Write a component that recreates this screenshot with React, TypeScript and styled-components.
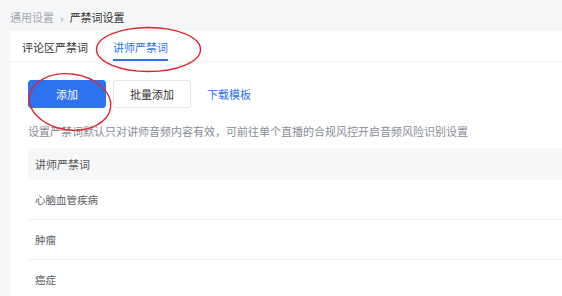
import React from "react";
import styled, { createGlobalStyle } from "styled-components";

const GlobalStyle = createGlobalStyle`
  html, body {
    margin: 0;
    padding: 0;
    background: #f5f6f8;
    font-family: "Noto Sans CJK SC", "Liberation Sans", sans-serif;
  }
`;

const Page = styled.div`
  position: relative;
  width: 562px;
  height: 296px;
  overflow: hidden;
  background: #f5f6f8;
  padding-left: 10px;
  box-sizing: border-box;
`;

const Crumbs = styled.div`
  height: 31px;
  display: flex;
  align-items: center;
  gap: 6px;
  font-size: 11px;
  padding-top: 3px;
  box-sizing: border-box;
  color: #a3a8b0;
  .sep {
    font-size: 12px;
    color: #a0a4ab;
  }
  .cur {
    color: #333;
  }
`;

const Panel = styled.div`
  background: #fff;
  height: 265px;
`;

const Tabs = styled.div`
  display: flex;
  height: 30px;
  padding-left: 12px;
  gap: 25px;
  border-bottom: 1px solid #eef0f3;
`;

const Tab = styled.div<{ $active?: boolean }>`
  position: relative;
  display: flex;
  align-items: center;
  font-size: 11px;
  padding-top: 2px;
  color: ${({ $active }) => ($active ? "#2d72ee" : "#333")};
  &::after {
    content: "";
    display: ${({ $active }) => ($active ? "block" : "none")};
    position: absolute;
    left: 0;
    right: 0;
    bottom: 0;
    height: 2px;
    background: #2d72ee;
  }
`;

const Content = styled.div`
  padding: 18px 0 0 18px;
`;

const Toolbar = styled.div`
  display: flex;
  align-items: center;
  gap: 7px;
`;

const Button = styled.button<{ $primary?: boolean }>`
  width: 78px;
  height: 28px;
  border-radius: 3px;
  font-family: inherit;
  font-size: 11px;
  cursor: pointer;
  border: 1px solid ${({ $primary }) => ($primary ? "#2d72ee" : "#e3e5e9")};
  background: ${({ $primary }) => ($primary ? "#2d72ee" : "#fff")};
  color: ${({ $primary }) => ($primary ? "#fff" : "#333")};
`;

const Link = styled.a`
  margin-left: 9px;
  font-size: 11px;
  color: #2d72ee;
  text-decoration: none;
`;

const Hint = styled.p`
  margin: 15px 0 0;
  font-size: 11px;
  line-height: 16px;
  color: #888d95;
  white-space: nowrap;
`;

const Table = styled.div`
  margin-top: 9px;
`;

const HeadRow = styled.div`
  height: 32px;
  display: flex;
  align-items: center;
  padding-left: 7px;
  background: #f5f7f9;
  font-size: 11px;
  color: #555;
`;

const Row = styled.div`
  height: 39px;
  display: flex;
  align-items: center;
  padding-left: 7px;
  border-bottom: 1px solid #eef0f3;
  font-size: 10.5px;
  color: #5a5e66;
`;

const Marks = styled.svg`
  position: absolute;
  left: 0;
  top: 0;
  pointer-events: none;
`;

const words = ["心脑血管疾病", "肿瘤", "癌症"];

function App() {
  return (
    <Page>
      <GlobalStyle />
      <Crumbs>
        <span>通用设置</span>
        <span className="sep">›</span>
        <span className="cur">严禁词设置</span>
      </Crumbs>
      <Panel>
        <Tabs>
          <Tab>评论区严禁词</Tab>
          <Tab $active>讲师严禁词</Tab>
        </Tabs>
        <Content>
          <Toolbar>
            <Button $primary>添加</Button>
            <Button>批量添加</Button>
            <Link href="#">下载模板</Link>
          </Toolbar>
          <Hint>
            设置严禁词默认只对讲师音频内容有效，可前往单个直播的合规风控开启音频风险识别设置
          </Hint>
          <Table>
            <HeadRow>讲师严禁词</HeadRow>
            {words.map((w) => (
              <Row key={w}>{w}</Row>
            ))}
          </Table>
        </Content>
      </Panel>
      <Marks width="562" height="296" viewBox="0 0 562 296">
        <ellipse cx="148.5" cy="49.5" rx="52" ry="22" fill="none" stroke="#e0242c" strokeWidth="1.4" />
        <ellipse
          cx="70"
          cy="102"
          rx="41"
          ry="28"
          fill="none"
          stroke="#e0242c"
          strokeWidth="1.4"
          transform="rotate(8 70 102)"
        />
      </Marks>
    </Page>
  );
}

export default App;
